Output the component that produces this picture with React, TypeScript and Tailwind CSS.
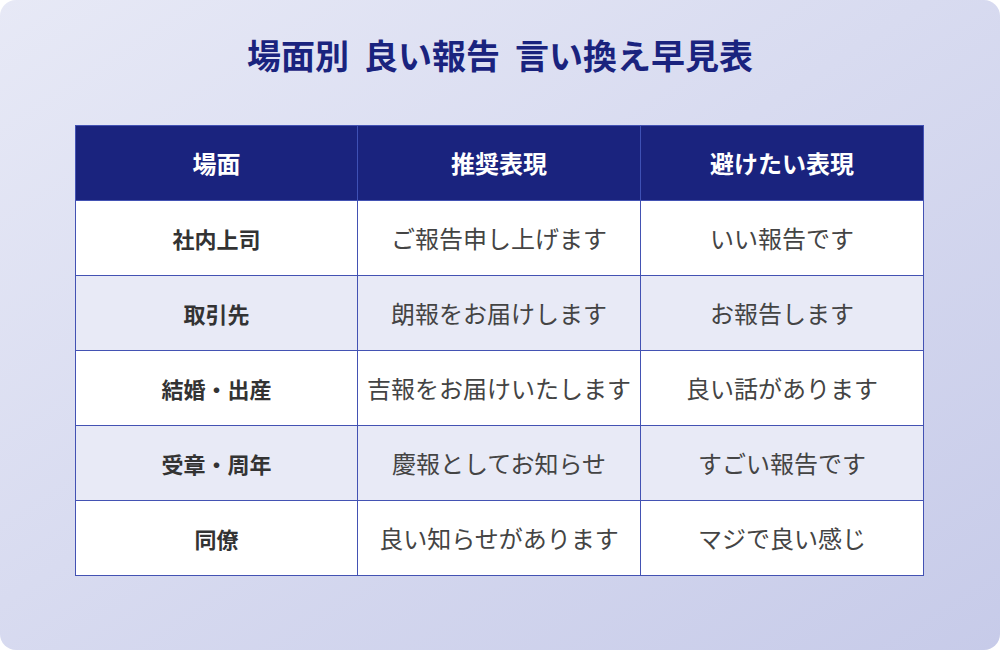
import React from "react";

type Row = { scene: string; good: string; bad: string };

const rows: Row[] = [
  { scene: "社内上司", good: "ご報告申し上げます", bad: "いい報告です" },
  { scene: "取引先", good: "朗報をお届けします", bad: "お報告します" },
  { scene: "結婚・出産", good: "吉報をお届けいたします", bad: "良い話があります" },
  { scene: "受章・周年", good: "慶報としてお知らせ", bad: "すごい報告です" },
  { scene: "同僚", good: "良い知らせがあります", bad: "マジで良い感じ" },
];

const font = { fontFamily: '"Noto Sans CJK JP", "Noto Sans", sans-serif' };

export default function App() {
  return (
    <div className="w-[1000px] h-[650px] bg-white" style={font}>
      <div className="w-full h-full rounded-2xl bg-gradient-to-br from-[#e7e9f6] to-[#c7cbe9] flex flex-col">
        {/* タイトル */}
        <h1 className="mt-[32px] h-[46px] leading-[46px] self-center flex gap-[15px] text-[34px] font-bold text-[#1a237e]">
          <span>場面別</span>
          <span>良い報告</span>
          <span>言い換え早見表</span>
        </h1>

        {/* 早見表 */}
        <table className="mt-[47px] ml-[75px] w-[848px] table-fixed border-collapse border border-[#4352b3]">
          <thead>
            <tr className="h-[75px] bg-[#1a237e] text-white text-[24px] font-bold">
              <th className="w-[282px] border-r border-[#3f51b5]">場面</th>
              <th className="w-[283px] border-r border-[#3f51b5]">推奨表現</th>
              <th className="w-[283px]">避けたい表現</th>
            </tr>
          </thead>
          <tbody>
            {rows.map((r, i) => (
              <tr
                key={r.scene}
                className={`h-[75px] ${i % 2 === 1 ? "bg-[#e8eaf6]" : "bg-white"}`}
              >
                <td className="border border-[#4352b3] text-center text-[22px] font-bold text-[#333333]">
                  {r.scene}
                </td>
                <td className="border border-[#4352b3] text-center text-[24px] text-[#444444]">
                  {r.good}
                </td>
                <td className="border border-[#4352b3] text-center text-[24px] text-[#444444]">
                  {r.bad}
                </td>
              </tr>
            ))}
          </tbody>
        </table>
      </div>
    </div>
  );
}
